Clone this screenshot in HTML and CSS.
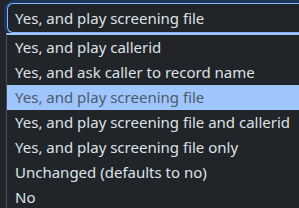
FILE: index.html
```html
<!DOCTYPE html>
<html lang="en">
<head>
    <meta charset="UTF-8">
    <title>Screening select</title>
    <link rel="stylesheet" href="styles.css">
</head>
<body>
    <div class="field">
        <div class="select-box">Yes, and play screening file</div>

        <ul class="options">
            <li>Yes, and play callerid</li>
            <li>Yes, and ask caller to record name</li>
            <li class="active">Yes, and play screening file</li>
            <li>Yes, and play screening file and callerid</li>
            <li>Yes, and play screening file only</li>
            <li>Unchanged (defaults to no)</li>
            <li>No</li>
        </ul>
    </div>
</body>
</html>
```

FILE: styles.css
```css
* {
    margin: 0;
    padding: 0;
    box-sizing: border-box;
}

body {
    font-family: 'Noto Sans', 'Open Sans', sans-serif;
    font-size: 15px;
    background: #212529;
    color: #dee2e6;
    overflow: hidden;
}

.field {
    padding: 3px 0 0 7px;
}

.select-box {
    height: 30px;
    line-height: 28px;
    padding-left: 7px;
    border: 1px solid #86b7fe;
    border-right: none;
    border-radius: 6px 0 0 6px;
    box-shadow: -3px 0 0 0 rgba(13, 110, 253, 0.25), 0 -3px 0 0 rgba(13, 110, 253, 0.25);
    background: #212529;
}

.options {
    list-style: none;
    margin-left: -1px;
    border-top: 2px solid #9ec5fe;
    border-left: 1px solid #495057;
    background: #212529;
}

.options li {
    height: 25px;
    line-height: 25px;
    padding-left: 8px;
    white-space: nowrap;
    overflow: hidden;
}

.options li.active {
    background: #9ec5fe;
    color: #4f5a66;
}
```
